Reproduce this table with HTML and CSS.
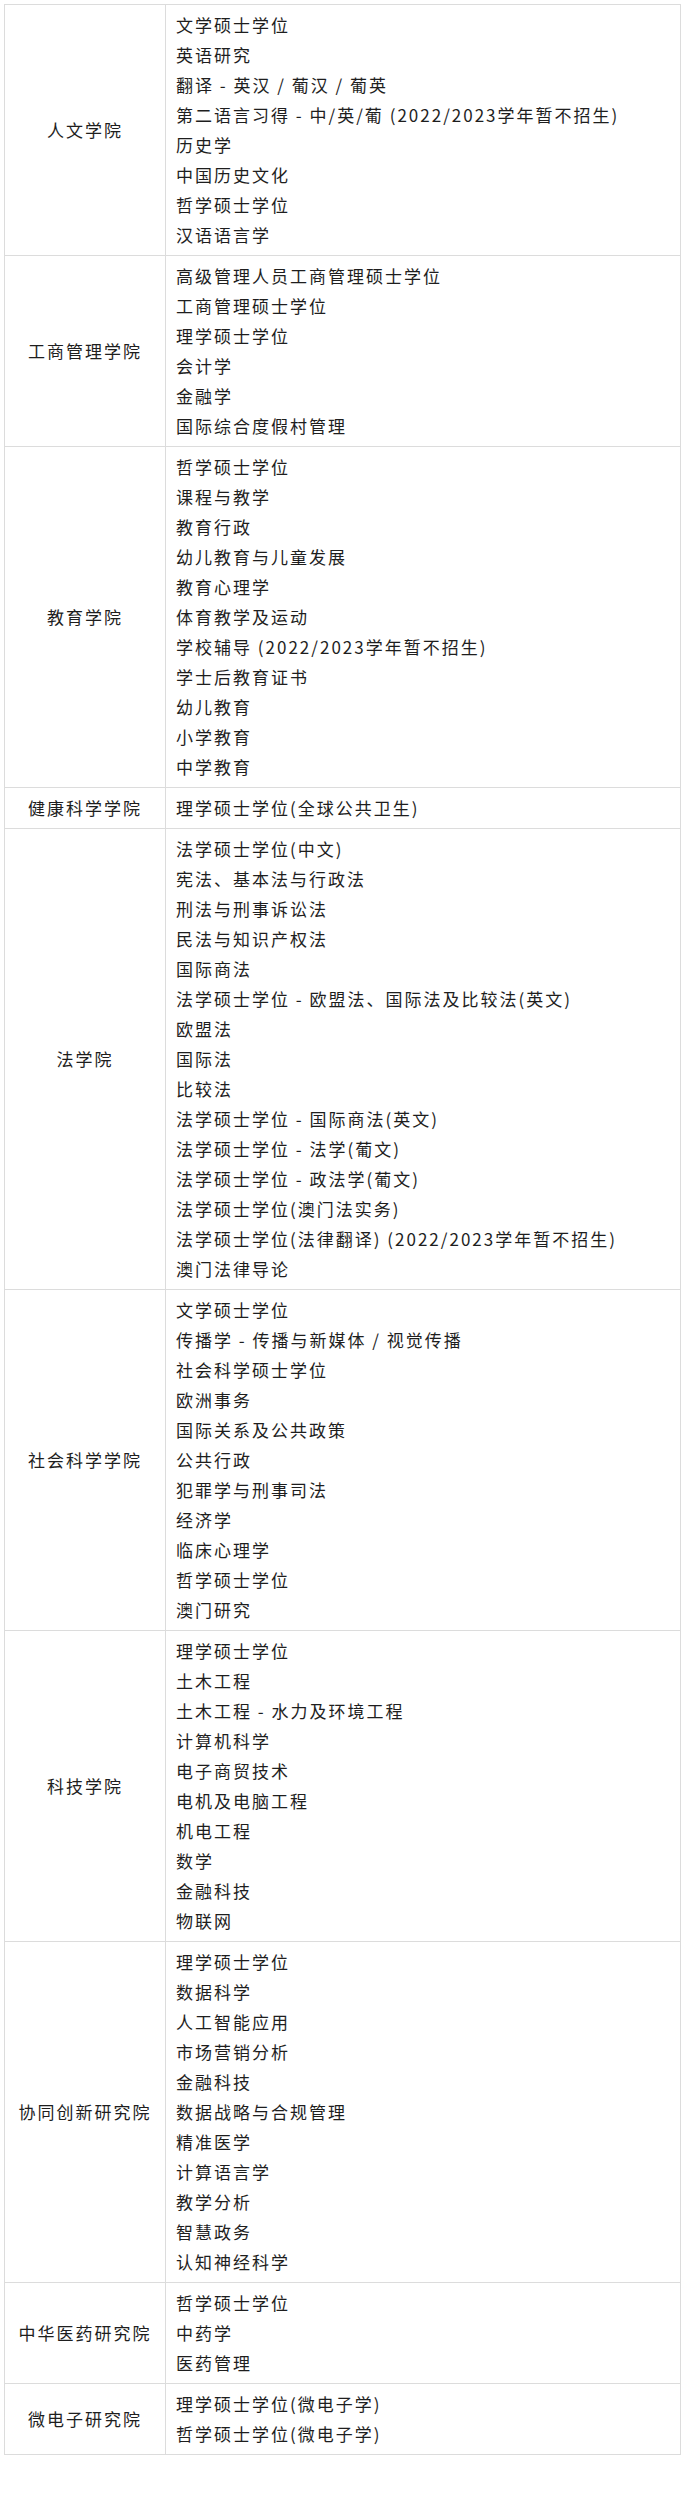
FILE: index.html
```html
<!DOCTYPE html>
<html lang="zh-CN">
<head>
<meta charset="utf-8">
<title>研究生课程</title>
<link rel="stylesheet" href="styles.css">
</head>
<body>
<div class="page">
<table class="programs">
<colgroup><col class="col-faculty"><col class="col-list"></colgroup>
<tbody>
<tr>
<td class="faculty">人文学院</td>
<td class="list">
<div>文学硕士学位</div>
<div>英语研究</div>
<div>翻译 - 英汉 / 葡汉 / 葡英</div>
<div>第二语言习得 - 中/英/葡 (2022/2023学年暂不招生)</div>
<div>历史学</div>
<div>中国历史文化</div>
<div>哲学硕士学位</div>
<div>汉语语言学</div>
</td>
</tr>
<tr>
<td class="faculty">工商管理学院</td>
<td class="list">
<div>高级管理人员工商管理硕士学位</div>
<div>工商管理硕士学位</div>
<div>理学硕士学位</div>
<div>会计学</div>
<div>金融学</div>
<div>国际综合度假村管理</div>
</td>
</tr>
<tr>
<td class="faculty">教育学院</td>
<td class="list">
<div>哲学硕士学位</div>
<div>课程与教学</div>
<div>教育行政</div>
<div>幼儿教育与儿童发展</div>
<div>教育心理学</div>
<div>体育教学及运动</div>
<div>学校辅导 (2022/2023学年暂不招生)</div>
<div>学士后教育证书</div>
<div>幼儿教育</div>
<div>小学教育</div>
<div>中学教育</div>
</td>
</tr>
<tr>
<td class="faculty">健康科学学院</td>
<td class="list">
<div>理学硕士学位(全球公共卫生)</div>
</td>
</tr>
<tr>
<td class="faculty">法学院</td>
<td class="list">
<div>法学硕士学位(中文)</div>
<div>宪法、基本法与行政法</div>
<div>刑法与刑事诉讼法</div>
<div>民法与知识产权法</div>
<div>国际商法</div>
<div>法学硕士学位 - 欧盟法、国际法及比较法(英文)</div>
<div>欧盟法</div>
<div>国际法</div>
<div>比较法</div>
<div>法学硕士学位 - 国际商法(英文)</div>
<div>法学硕士学位 - 法学(葡文)</div>
<div>法学硕士学位 - 政法学(葡文)</div>
<div>法学硕士学位(澳门法实务)</div>
<div>法学硕士学位(法律翻译) (2022/2023学年暂不招生)</div>
<div>澳门法律导论</div>
</td>
</tr>
<tr>
<td class="faculty">社会科学学院</td>
<td class="list">
<div>文学硕士学位</div>
<div>传播学 - 传播与新媒体 / 视觉传播</div>
<div>社会科学硕士学位</div>
<div>欧洲事务</div>
<div>国际关系及公共政策</div>
<div>公共行政</div>
<div>犯罪学与刑事司法</div>
<div>经济学</div>
<div>临床心理学</div>
<div>哲学硕士学位</div>
<div>澳门研究</div>
</td>
</tr>
<tr>
<td class="faculty">科技学院</td>
<td class="list">
<div>理学硕士学位</div>
<div>土木工程</div>
<div>土木工程 - 水力及环境工程</div>
<div>计算机科学</div>
<div>电子商贸技术</div>
<div>电机及电脑工程</div>
<div>机电工程</div>
<div>数学</div>
<div>金融科技</div>
<div>物联网</div>
</td>
</tr>
<tr>
<td class="faculty">协同创新研究院</td>
<td class="list">
<div>理学硕士学位</div>
<div>数据科学</div>
<div>人工智能应用</div>
<div>市场营销分析</div>
<div>金融科技</div>
<div>数据战略与合规管理</div>
<div>精准医学</div>
<div>计算语言学</div>
<div>教学分析</div>
<div>智慧政务</div>
<div>认知神经科学</div>
</td>
</tr>
<tr>
<td class="faculty">中华医药研究院</td>
<td class="list">
<div>哲学硕士学位</div>
<div>中药学</div>
<div>医药管理</div>
</td>
</tr>
<tr>
<td class="faculty">微电子研究院</td>
<td class="list">
<div>理学硕士学位(微电子学)</div>
<div>哲学硕士学位(微电子学)</div>
</td>
</tr>
</tbody>
</table>
</div>
</body>
</html>
```
FILE: styles.css
```css
html, body {
  margin: 0;
  padding: 0;
  background: #ffffff;
}

.page {
  padding: 4px 0 0 4px;
}

.programs {
  border-collapse: collapse;
  table-layout: fixed;
  width: 677px;
  font-family: "Noto Sans CJK SC", "Microsoft YaHei", sans-serif;
  font-size: 17px;
  letter-spacing: 2px;
  color: #1e1e1e;
}

.col-faculty {
  width: 161px;
}

.programs td {
  border: 1px solid #dcdcdc;
  padding: 5px 0;
  line-height: 30px;
}

.faculty {
  text-align: center;
  vertical-align: middle;
}

.list {
  vertical-align: middle;
  padding-left: 10px !important;
  white-space: nowrap;
}

.list div {
  height: 30px;
}
```
